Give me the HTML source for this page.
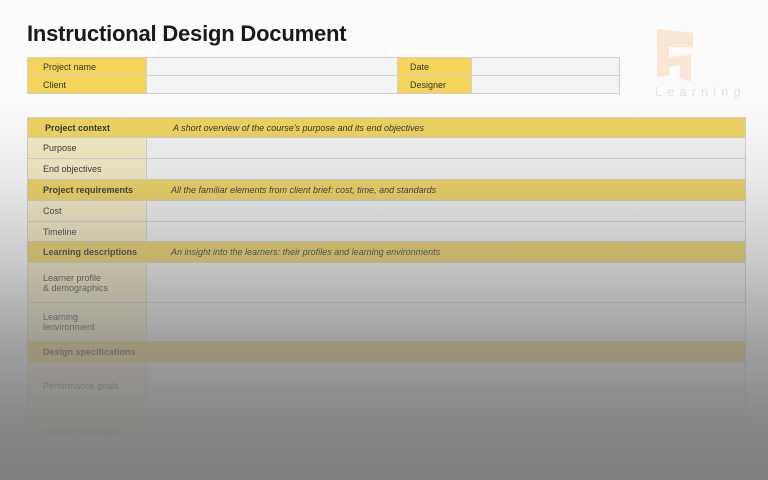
<!DOCTYPE html>
<html><head><meta charset="utf-8"><style>
*{margin:0;padding:0;box-sizing:border-box}
body{width:768px;height:480px;overflow:hidden;background:#fbfbfb;font-family:"Liberation Sans",sans-serif;position:relative}
h1{position:absolute;left:27px;top:21px;font-size:22px;font-weight:bold;color:#1a1a1a;letter-spacing:-0.2px}
.c{position:absolute;font-size:9px;color:#333;padding-left:15px;display:flex;align-items:center;border:1px solid #d0d0d0}
.y{background:#f4d55a}.v{background:#f3f3f3}.l{background:#f5ebc3}.h{background:#efd35e;font-weight:bold}
.it{font-style:italic;font-weight:normal}
#ov{position:absolute;left:0;top:0;width:768px;height:480px;background:linear-gradient(to bottom,rgba(128,128,128,0) 0px,rgba(128,128,128,0) 105px,rgba(128,128,128,0.15) 180px,rgba(128,128,128,0.42) 265px,rgba(128,128,128,0.72) 340px,rgba(128,128,128,0.94) 420px,rgba(128,128,128,1) 470px)}
</style></head><body>
<h1>Instructional Design Document</h1>
<div class="c y" style="left:27px;top:57px;width:120px;height:19px">Project name</div>
<div class="c v" style="left:146px;top:57px;width:252px;height:19px"></div>
<div class="c y" style="left:397px;top:57px;width:75px;height:19px;padding-left:12px">Date</div>
<div class="c v" style="left:471px;top:57px;width:149px;height:19px"></div>
<div class="c y" style="left:27px;top:75px;width:120px;height:19px">Client</div>
<div class="c v" style="left:146px;top:75px;width:252px;height:19px"></div>
<div class="c y" style="left:397px;top:75px;width:75px;height:19px;padding-left:12px">Designer</div>
<div class="c v" style="left:471px;top:75px;width:149px;height:19px"></div>

<svg style="position:absolute;left:655px;top:27px" width="42" height="56" viewBox="0 0 42 56"><path d="M2 2 L38 6 L38 20 L14 20 L14 30 L36 28 L36 54 L25 52 L25 38 L14 40 L14 48 L2 50 Z" fill="#fae6d2"/></svg>
<div style="position:absolute;left:655px;top:84px;font-size:13px;letter-spacing:5px;color:#e2e2e2">Learning</div>

<div class="c h" style="left:27px;top:117px;width:719px;height:21px;padding-left:17px">Project context<span class="it" style="position:absolute;left:145px">A short overview of the course's purpose and its end objectives</span></div>
<div class="c l" style="left:27px;top:137px;width:120px;height:22px">Purpose</div><div class="c v" style="left:146px;top:137px;width:600px;height:22px"></div>
<div class="c l" style="left:27px;top:158px;width:120px;height:22px">End objectives</div><div class="c v" style="left:146px;top:158px;width:600px;height:22px"></div>
<div class="c h" style="left:27px;top:179px;width:719px;height:22px">Project requirements<span class="it" style="position:absolute;left:143px">All the familiar elements from client brief: cost, time, and standards</span></div>
<div class="c l" style="left:27px;top:200px;width:120px;height:22px">Cost</div><div class="c v" style="left:146px;top:200px;width:600px;height:22px"></div>
<div class="c l" style="left:27px;top:221px;width:120px;height:21px">Timeline</div><div class="c v" style="left:146px;top:221px;width:600px;height:21px"></div>
<div class="c h" style="left:27px;top:241px;width:719px;height:22px">Learning descriptions<span class="it" style="position:absolute;left:143px">An insight into the learners: their profiles and learning environments</span></div>
<div class="c l" style="left:27px;top:262px;width:120px;height:41px">Learner profile<br>&amp; demographics</div><div class="c v" style="left:146px;top:262px;width:600px;height:41px"></div>
<div class="c l" style="left:27px;top:302px;width:120px;height:40px">Learning<br>lenvironment</div><div class="c v" style="left:146px;top:302px;width:600px;height:40px"></div>
<div class="c h" style="left:27px;top:341px;width:719px;height:22px">Design specifications</div>
<div class="c l" style="left:27px;top:362px;width:120px;height:47px">Performance goals</div><div class="c v" style="left:146px;top:362px;width:600px;height:47px"></div>
<div class="c l" style="left:27px;top:408px;width:120px;height:48px">Learning strategies</div><div class="c v" style="left:146px;top:408px;width:600px;height:48px"></div>
<div id="ov"></div>
</body></html>
